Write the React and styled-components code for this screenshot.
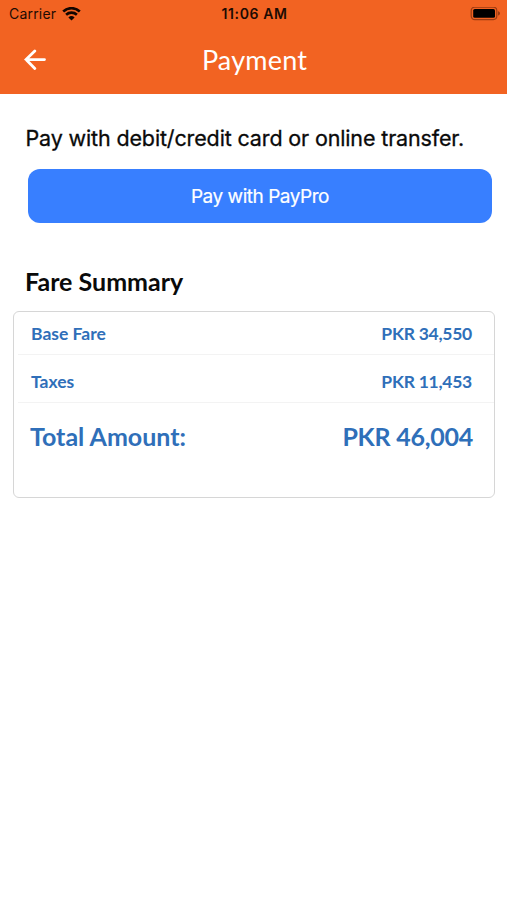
import styled, { createGlobalStyle } from "styled-components";

const GlobalStyle = createGlobalStyle`
  * {
    box-sizing: border-box;
  }

  body {
    margin: 0;
    background: #fff;
    font-family: Lato, sans-serif;
  }
`;

const Screen = styled.div`
  width: 507px;
  height: 900px;
  overflow: hidden;
  background: #fff;
`;

const Header = styled.header`
  height: 93.5px;
  background: #f26322;
`;

const StatusBar = styled.div`
  display: grid;
  grid-template-columns: 1fr auto 1fr;
  align-items: center;
  height: 27px;
  padding: 0 7px 0 9px;
  color: #1d0b03;
  font-family: Inter, sans-serif;
  font-size: 14px;
  line-height: 27px;
`;

const Carrier = styled.div`
  display: flex;
  align-items: center;
  gap: 6px;
  letter-spacing: 0.2px;
`;

const Clock = styled.div`
  font-weight: 600;
  letter-spacing: 0.6px;
`;

const Battery = styled.svg`
  justify-self: end;
`;

const NavBar = styled.div`
  display: grid;
  grid-template-columns: 48px 1fr 48px;
  align-items: center;
  height: 66px;
`;

const BackButton = styled.button`
  display: flex;
  padding: 0 0 0 24px;
  border: 0;
  background: none;
`;

const Title = styled.h1`
  margin: 0;
  padding-left: 2px;
  color: #fff;
  font-size: 27px;
  font-weight: 400;
  letter-spacing: 0.2px;
  line-height: 66px;
  text-align: center;
`;

const Prompt = styled.p`
  margin: 29px 0 0 25.5px;
  color: #0a0a0a;
  font-family: Inter, sans-serif;
  font-size: 21.5px;
  letter-spacing: -0.14px;
  line-height: 30px;
  white-space: nowrap;
  -webkit-text-stroke: 0.3px #0a0a0a;
`;

const PayButton = styled.button`
  display: block;
  width: 464px;
  height: 54px;
  margin: 16px 0 0 28px;
  padding: 2px 0 0;
  border: 0;
  border-radius: 12px;
  background: #387fff;
  color: #fff;
  font-family: Inter, sans-serif;
  font-size: 19px;
  letter-spacing: -0.47px;
  -webkit-text-stroke: 0.2px #fff;
`;

const Heading = styled.h2`
  margin: 42px 0 0 25px;
  color: #0a0a0a;
  font-size: 25px;
  font-weight: 700;
  line-height: 32px;
`;

const Card = styled.section`
  width: 482px;
  height: 187px;
  margin: 14px 0 0 13px;
  padding-left: 4px;
  border: 1.5px solid #d6d6d6;
  border-radius: 6px;
`;

const Row = styled.div`
  display: flex;
  justify-content: space-between;
  align-items: flex-end;
  height: ${(props) => props.$height}px;
  padding: 0 22px 8px 13px;
  border-bottom: 1px solid #f3f3f3;
  color: #2f6fb9;
  font-size: 17.5px;
  font-weight: 700;
  line-height: 24px;
`;

const Amount = styled.span`
  letter-spacing: -0.25px;
`;

const TotalRow = styled(Row)`
  padding: 0 21px 1px 12px;
  border-bottom: 0;
  font-size: 25px;
  line-height: 30px;
`;

const fares = [
  { label: "Base Fare", amount: "PKR 34,550", height: 43 },
  { label: "Taxes", amount: "PKR 11,453", height: 48 },
];

function WifiIcon() {
  return (
    <svg width="19" height="14" viewBox="0 0 19 14" fill="none" stroke="#120500" strokeWidth="2.6">
      <path d="M1.2 4.5a12 12 0 0 1 16.6 0" />
      <path d="M4.1 7.8a7.9 7.9 0 0 1 10.8 0" />
      <path d="M9.5 13.4 6.4 10.4a4.5 4.5 0 0 1 6.2 0Z" fill="#120500" stroke="none" />
    </svg>
  );
}

function BatteryIcon() {
  return (
    <Battery width="30" height="14" viewBox="0 0 30 14">
      <rect x="1.2" y="0.2" width="25.6" height="12.4" rx="3.5" fill="none" stroke="#9c3c13" strokeWidth="1.2" />
      <rect x="3.2" y="2" width="21.8" height="8.8" rx="1.6" fill="#000" />
      <path d="M28 4.3c2.7 .8 2.7 3.4 0 4.2Z" fill="#9c3c13" />
    </Battery>
  );
}

function BackIcon() {
  return (
    <svg width="23" height="22" viewBox="0 0 23 22" fill="none" stroke="#fff" strokeWidth="2.8">
      <path d="M10.8 1.9 2 10.6l8.8 8.9M2 10.6H20.5" strokeLinecap="round" strokeLinejoin="miter" />
    </svg>
  );
}

function App() {
  return (
    <>
      <GlobalStyle />
      <Screen>
        <Header>
          <StatusBar>
            <Carrier>
              <span>Carrier</span>
              <WifiIcon />
            </Carrier>
            <Clock>11:06 AM</Clock>
            <BatteryIcon />
          </StatusBar>
          <NavBar>
            <BackButton aria-label="Back">
              <BackIcon />
            </BackButton>
            <Title>Payment</Title>
          </NavBar>
        </Header>

        <main>
          <Prompt>Pay with debit/credit card or online transfer.</Prompt>
          <PayButton>Pay with PayPro</PayButton>

          <Heading>Fare Summary</Heading>
          <Card>
            {fares.map((fare) => (
              <Row key={fare.label} $height={fare.height}>
                <span>{fare.label}</span>
                <Amount>{fare.amount}</Amount>
              </Row>
            ))}
            <TotalRow $height={49}>
              <span>Total Amount:</span>
              <Amount>PKR 46,004</Amount>
            </TotalRow>
          </Card>
        </main>
      </Screen>
    </>
  );
}

export default App;
